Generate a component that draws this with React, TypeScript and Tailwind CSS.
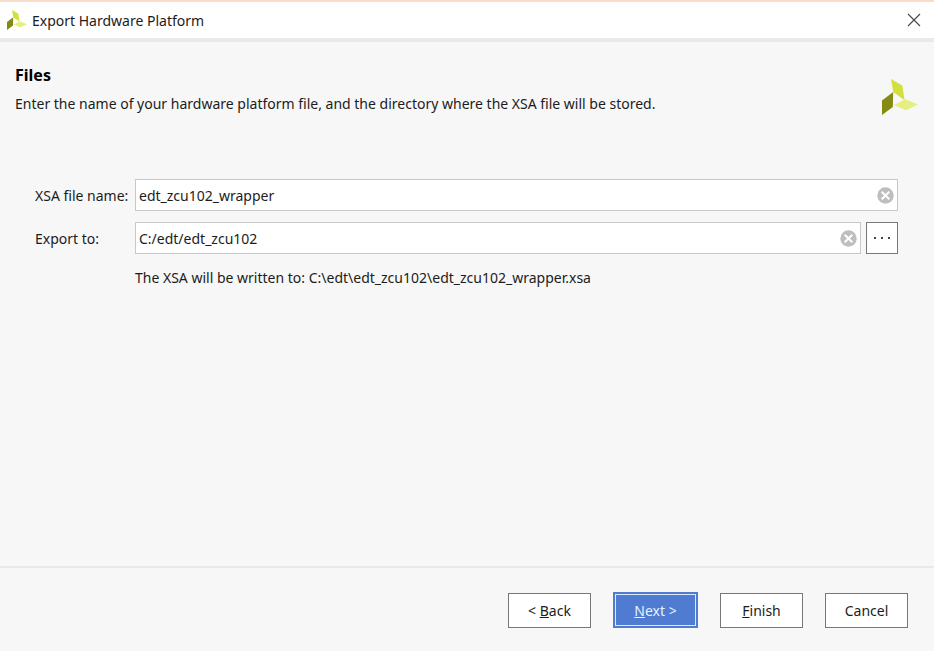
import { useState } from "react";
import type { ReactNode } from "react";

function Logo({ className }: { className: string }) {
  return (
    <svg viewBox="0 0 36 36" className={className} aria-hidden="true">
      <path d="M9 0 L20.3 6.5 L22.6 21.3 L11.3 13 Z" fill="#d3e03c" />
      <path d="M0 21.5 L11.2 13 L10.8 28 L0 36 Z" fill="#858a12" />
      <path d="M12 26 L23.3 20.3 L36 25.5 L24 31.2 Z" fill="#e4ef80" />
    </svg>
  );
}

type FieldProps = {
  id: string;
  value: string;
  onChange: (value: string) => void;
};

function ClearableInput({ id, value, onChange }: FieldProps) {
  return (
    <div className="flex h-8 min-w-0 flex-1 items-center border border-[#c9c9c9] bg-white pr-[3px] pl-[3px]">
      <input
        id={id}
        type="text"
        value={value}
        onChange={(e) => onChange(e.target.value)}
        className="h-full min-w-0 flex-1 bg-transparent outline-none"
      />
      <button type="button" aria-label="Clear" onClick={() => onChange("")}>
        <svg viewBox="0 0 17 17" className="size-[17px]" aria-hidden="true">
          <circle cx="8.5" cy="8.5" r="8.2" fill="#bebebe" />
          <path d="M4.7 4.7 L12.3 12.3 M12.3 4.7 L4.7 12.3" stroke="#fff" strokeWidth="2" />
        </svg>
      </button>
    </div>
  );
}

function DialogButton({ children }: { children: ReactNode }) {
  return (
    <button type="button" className="h-[35px] w-[83px] border border-[#777] bg-white pt-[2px]">
      {children}
    </button>
  );
}

export default function App() {
  const [name, setName] = useState("edt_zcu102_wrapper");
  const [dir, setDir] = useState("C:/edt/edt_zcu102");

  return (
    <div className="flex min-h-screen flex-col border-b border-white bg-[#f7f7f7] font-['Noto_Sans',sans-serif] text-[14px] leading-5 text-[#1c1c1c]">
      <header className="flex h-[42px] items-center border-t-2 border-b-4 border-t-[#fbdcc8] border-b-[#e9e9e9] bg-white pr-3 pl-[7px]">
        <Logo className="size-5" />
        <span className="ml-[5px] pt-[2px]">Export Hardware Platform</span>
        <button type="button" aria-label="Close" className="ml-auto">
          <svg viewBox="0 0 16 16" className="size-4" aria-hidden="true">
            <path d="M2 2 L14 14 M14 2 L2 14" stroke="#4a4a4a" strokeWidth="1.2" />
          </svg>
        </button>
      </header>

      <main className="flex-1">
        <div className="flex justify-between pt-[23px] pr-4 pl-[15px]">
          <div>
            <h1 className="mb-[9px] text-[16px] leading-5 font-bold text-black">Files</h1>
            <p>Enter the name of your hardware platform file, and the directory where the XSA file will be stored.</p>
          </div>
          <Logo className="mt-[14px] size-9 shrink-0" />
        </div>

        <form className="mt-[64px] grid grid-cols-[100px_1fr] items-center gap-y-[11px] pr-9 pl-[35px]">
          <label htmlFor="xsa-name" className="pt-[2px]">XSA file name:</label>
          <div className="flex">
            <ClearableInput id="xsa-name" value={name} onChange={setName} />
          </div>
          <label htmlFor="export-dir" className="pt-[2px]">Export to:</label>
          <div className="flex gap-[5px]">
            <ClearableInput id="export-dir" value={dir} onChange={setDir} />
            <button
              type="button"
              aria-label="Browse"
              className="flex size-8 items-center justify-center border border-[#777] bg-white"
            >
              <svg viewBox="0 0 16 2" className="h-[2px] w-4" fill="#444" aria-hidden="true">
                <rect width="2" height="2" />
                <rect x="7" width="2" height="2" />
                <rect x="14" width="2" height="2" />
              </svg>
            </button>
          </div>
          <p className="col-start-2 pt-[3px]">
            The XSA will be written to: {dir.replace(/\//g, "\\")}\{name}.xsa
          </p>
        </form>
      </main>

      <footer className="flex items-center justify-end gap-[22px] border-t-2 border-[#e9e9e9] pt-[24px] pr-[26px] pb-[23px]">
        <DialogButton>
          &lt; <u>B</u>ack
        </DialogButton>
        <button type="button" className="h-9 w-[85px] bg-[#4f7bd0] p-[2px] text-[#e8f0ff]">
          <span className="flex h-full items-center justify-center border border-[#dce8fb] pt-[2px] whitespace-pre">
            <u>N</u>ext &gt;
          </span>
        </button>
        <DialogButton>
          <u>F</u>inish
        </DialogButton>
        <DialogButton>Cancel</DialogButton>
      </footer>
    </div>
  );
}
